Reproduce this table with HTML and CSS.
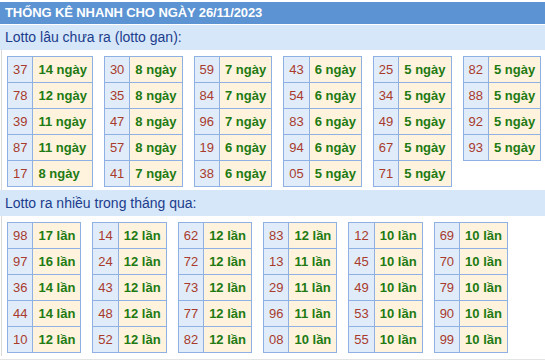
FILE: index.html
```html
<!DOCTYPE html>
<html>
<head>
<meta charset="utf-8">
<link rel="stylesheet" href="styles.css">
</head>
<body>
<div class="box">
  <div class="title">THỐNG KÊ NHANH CHO NGÀY 26/11/2023</div>
  <div class="band">Lotto lâu chưa ra (lotto gan):</div>
  <div class="grid">
    <table class="lt"><tr><td class="n">37</td><td class="v">14 ngày</td></tr><tr><td class="n">78</td><td class="v">12 ngày</td></tr><tr><td class="n">39</td><td class="v">11 ngày</td></tr><tr><td class="n">87</td><td class="v">11 ngày</td></tr><tr><td class="n">17</td><td class="v">8 ngày</td></tr></table>
    <table class="lt"><tr><td class="n">30</td><td class="v">8 ngày</td></tr><tr><td class="n">35</td><td class="v">8 ngày</td></tr><tr><td class="n">47</td><td class="v">8 ngày</td></tr><tr><td class="n">57</td><td class="v">8 ngày</td></tr><tr><td class="n">41</td><td class="v">7 ngày</td></tr></table>
    <table class="lt"><tr><td class="n">59</td><td class="v">7 ngày</td></tr><tr><td class="n">84</td><td class="v">7 ngày</td></tr><tr><td class="n">96</td><td class="v">7 ngày</td></tr><tr><td class="n">19</td><td class="v">6 ngày</td></tr><tr><td class="n">38</td><td class="v">6 ngày</td></tr></table>
    <table class="lt"><tr><td class="n">43</td><td class="v">6 ngày</td></tr><tr><td class="n">54</td><td class="v">6 ngày</td></tr><tr><td class="n">83</td><td class="v">6 ngày</td></tr><tr><td class="n">94</td><td class="v">6 ngày</td></tr><tr><td class="n">05</td><td class="v">5 ngày</td></tr></table>
    <table class="lt"><tr><td class="n">25</td><td class="v">5 ngày</td></tr><tr><td class="n">34</td><td class="v">5 ngày</td></tr><tr><td class="n">49</td><td class="v">5 ngày</td></tr><tr><td class="n">67</td><td class="v">5 ngày</td></tr><tr><td class="n">71</td><td class="v">5 ngày</td></tr></table>
    <table class="lt"><tr><td class="n">82</td><td class="v">5 ngày</td></tr><tr><td class="n">88</td><td class="v">5 ngày</td></tr><tr><td class="n">92</td><td class="v">5 ngày</td></tr><tr><td class="n">93</td><td class="v">5 ngày</td></tr></table>
  </div>
  <div class="band band2">Lotto ra nhiều trong tháng qua:</div>
  <div class="grid">
    <table class="lt"><tr><td class="n">98</td><td class="v">17 lần</td></tr><tr><td class="n">97</td><td class="v">16 lần</td></tr><tr><td class="n">36</td><td class="v">14 lần</td></tr><tr><td class="n">44</td><td class="v">14 lần</td></tr><tr><td class="n">10</td><td class="v">12 lần</td></tr></table>
    <table class="lt"><tr><td class="n">14</td><td class="v">12 lần</td></tr><tr><td class="n">24</td><td class="v">12 lần</td></tr><tr><td class="n">43</td><td class="v">12 lần</td></tr><tr><td class="n">48</td><td class="v">12 lần</td></tr><tr><td class="n">52</td><td class="v">12 lần</td></tr></table>
    <table class="lt"><tr><td class="n">62</td><td class="v">12 lần</td></tr><tr><td class="n">72</td><td class="v">12 lần</td></tr><tr><td class="n">73</td><td class="v">12 lần</td></tr><tr><td class="n">77</td><td class="v">12 lần</td></tr><tr><td class="n">82</td><td class="v">12 lần</td></tr></table>
    <table class="lt"><tr><td class="n">83</td><td class="v">12 lần</td></tr><tr><td class="n">13</td><td class="v">11 lần</td></tr><tr><td class="n">29</td><td class="v">11 lần</td></tr><tr><td class="n">96</td><td class="v">11 lần</td></tr><tr><td class="n">08</td><td class="v">10 lần</td></tr></table>
    <table class="lt"><tr><td class="n">12</td><td class="v">10 lần</td></tr><tr><td class="n">45</td><td class="v">10 lần</td></tr><tr><td class="n">49</td><td class="v">10 lần</td></tr><tr><td class="n">53</td><td class="v">10 lần</td></tr><tr><td class="n">55</td><td class="v">10 lần</td></tr></table>
    <table class="lt"><tr><td class="n">69</td><td class="v">10 lần</td></tr><tr><td class="n">70</td><td class="v">10 lần</td></tr><tr><td class="n">79</td><td class="v">10 lần</td></tr><tr><td class="n">90</td><td class="v">10 lần</td></tr><tr><td class="n">99</td><td class="v">10 lần</td></tr></table>
  </div>
</div>
</body>
</html>
```
FILE: styles.css
```css
html, body {
  margin: 0;
  padding: 0;
  background: #fff;
  font-family: "Liberation Sans", Arial, sans-serif;
}
.box {
  padding-top: 2px;
  height: 357px;
  border-bottom: 1px solid #e4e4e4;
  box-sizing: content-box;
}
.title {
  background: #5b93d3;
  color: #fff;
  font-weight: bold;
  font-size: 13px;
  height: 22px;
  line-height: 22px;
  padding-left: 5px;
  letter-spacing: -0.1px;
}
.band {
  margin-top: 1px;
  background: #d6e7f9;
  color: #1c3c8c;
  font-size: 14px;
  height: 25px;
  line-height: 25px;
  padding-left: 5px;
}
.band2 {
  margin-top: 0;
  height: 26px;
  line-height: 27px;
}
.grid {
  display: flex;
  align-items: flex-start;
  gap: 11px;
  margin-left: 1px;
  border-left: 1px solid #d9d9d9;
  padding: 6px 0 3px 5px;
}
.lt {
  border-collapse: collapse;
  font-size: 13px;
}
.lt td {
  border: 1px solid #8fb0e2;
  height: 25px;
  padding: 0 5px;
  line-height: 25px;
  white-space: nowrap;
}
.n {
  background: #e1ecfa;
  color: #a83b2c;
  text-align: center;
}
.v {
  background: #fff3de;
  color: #217a12;
  font-weight: bold;
}
```
